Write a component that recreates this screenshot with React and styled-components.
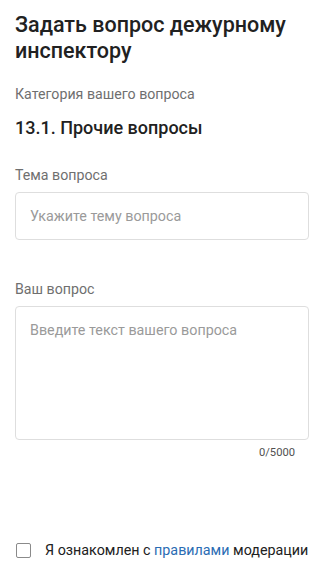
import styled, { createGlobalStyle } from "styled-components";

const GlobalStyle = createGlobalStyle`
  html, body {
    margin: 0;
    padding: 0;
    background: #ffffff;
  }
  body {
    font-family: Roboto, "Noto Sans", Arial, sans-serif;
    color: #212121;
  }
`;

export default function App() {
  return (
    <>
      <GlobalStyle />
      <Page>
        <Title>Задать вопрос дежурному инспектору</Title>

        <Section>
          <Caption>Категория вашего вопроса</Caption>
          <Category>13.1. Прочие вопросы</Category>
        </Section>

        <Field $top={29}>
          <Caption>Тема вопроса</Caption>
          <Input placeholder="Укажите тему вопроса" />
        </Field>

        <Field $top={41}>
          <Caption>Ваш вопрос</Caption>
          <TextArea placeholder="Введите текст вашего вопроса" />
          <Counter>0/5000</Counter>
        </Field>

        <Agree>
          <Checkbox type="checkbox" />
          <AgreeText>
            Я ознакомлен с <RulesLink href="#">правилами</RulesLink> модерации
          </AgreeText>
        </Agree>
      </Page>
    </>
  );
}

const Page = styled.div`
  width: 324px;
  height: 576px;
  box-sizing: border-box;
  padding: 12px 15px 0 15px;
  display: flex;
  flex-direction: column;
`;

const Title = styled.h1`
  margin: 0;
  font-size: 21.5px;
  line-height: 26px;
  font-weight: 500;
  color: #212121;
`;

const Section = styled.div`
  margin-top: 22px;
  display: flex;
  flex-direction: column;
  gap: 14px;
`;

const Caption = styled.div`
  font-size: 14.2px;
  line-height: 17px;
  color: #6f6f6f;
`;

const Category = styled.div`
  font-size: 18px;
  line-height: 21px;
  font-weight: 500;
  color: #212121;
`;

const Field = styled.div`
  margin-top: ${(p) => p.$top}px;
  display: flex;
  flex-direction: column;
  gap: 8px;
`;

const Input = styled.input`
  box-sizing: border-box;
  width: 100%;
  height: 48px;
  padding: 0 14px;
  border: 1px solid #dedede;
  border-radius: 4px;
  font-family: inherit;
  font-size: 14.3px;
  color: #212121;
  outline: none;

  &::placeholder {
    color: #9a9a9a;
  }
`;

const TextArea = styled.textarea`
  box-sizing: border-box;
  width: 100%;
  height: 134px;
  padding: 14px 14px;
  border: 1px solid #dedede;
  border-radius: 4px;
  font-family: inherit;
  font-size: 14.3px;
  line-height: 18px;
  resize: none;
  outline: none;

  &::placeholder {
    color: #9a9a9a;
  }
`;

const Counter = styled.div`
  margin-top: -2px;
  padding-right: 14px;
  text-align: right;
  font-size: 11.2px;
  line-height: 14px;
  color: #505050;
`;

const Agree = styled.label`
  margin-top: auto;
  margin-bottom: 17px;
  display: flex;
  align-items: center;
  gap: 14px;
  white-space: nowrap;
`;

const Checkbox = styled.input`
  flex: none;
  appearance: none;
  margin: 0 0 0 1px;
  width: 15px;
  height: 15px;
  border: 1.5px solid #8a8a8a;
  border-radius: 2px;
  box-sizing: border-box;
`;

const AgreeText = styled.span`
  font-size: 14.3px;
  line-height: 18px;
  color: #212121;
`;

const RulesLink = styled.a`
  color: #2a6cb3;
  text-decoration: none;
`;
